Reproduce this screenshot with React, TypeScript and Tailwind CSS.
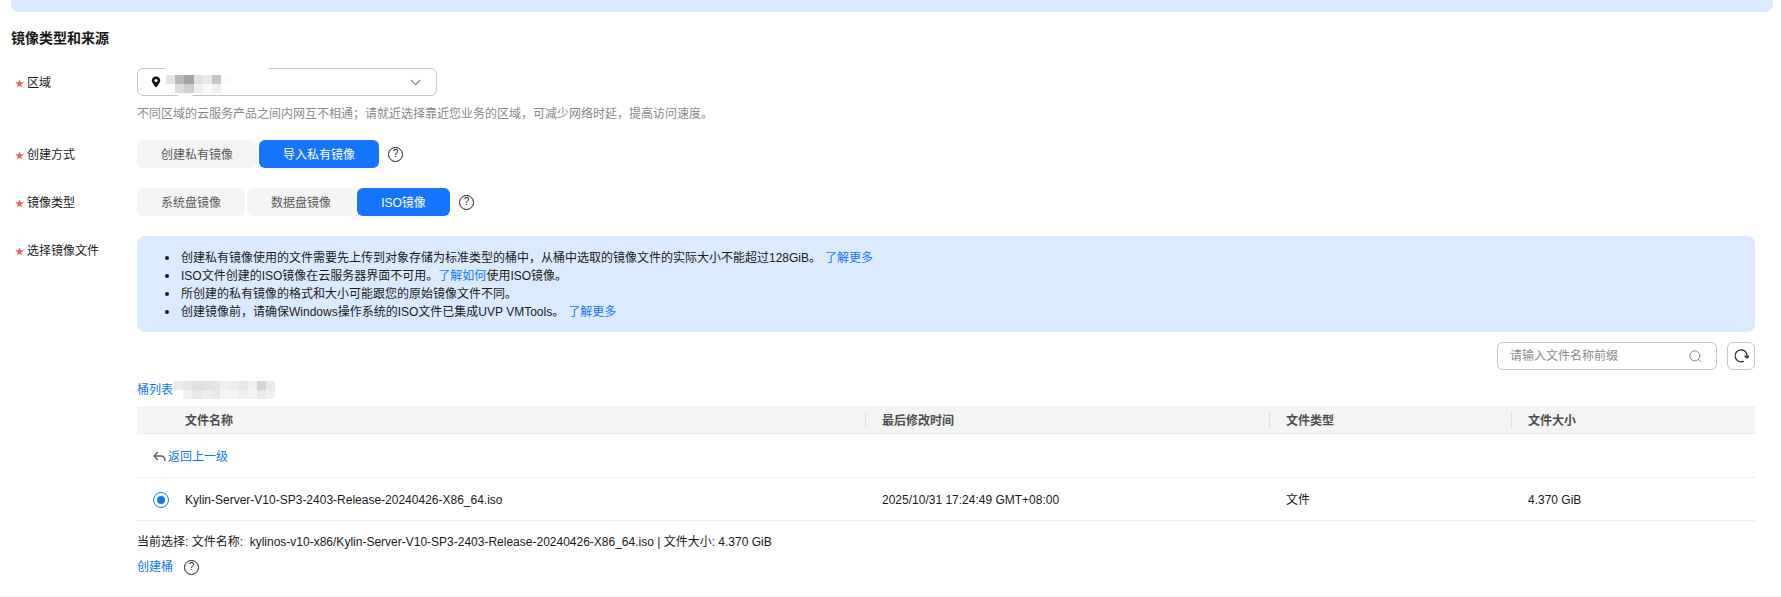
import { Search, ChevronDown } from 'lucide-react';

const regionCells = [
  ['#e5e5e5', '#b8b8b8', '#a5a5a9', '#e0e0e0', '#e8e8e8', '#c4c4c4', '#fafdff'],
  ['#ffffff', '#dcdcdc', '#cfcfcf', '#f0f0f0', '#fafaf8', '#f0f0ec', '#ffffff'],
];

const bucketCells = [
  ['#e8ebee', '#e6e6e6', '#e0e0e0', '#e2e2e4', '#e6e4e4', '#f0f0f0', '#ebedee', '#e6e8e8', '#eff0f0', '#d5d5d3', '#e8eaec'],
  ['#ffffff', '#f0f0f0', '#e8e8e8', '#ededed', '#e8e8e8', '#f4f4f4', '#f4f4f4', '#efefef', '#f3f3f3', '#e8e8e8', '#f0f0f2'],
];

function Mosaic({ cells, className }: { cells: string[][]; className: string }) {
  return (
    <div className={`absolute flex flex-col ${className}`}>
      {cells.map((row, i) => (
        <div key={i} className="flex">
          {row.map((color, j) => (
            <div key={j} className="w-[9.2px] h-[9px]" style={{ backgroundColor: color }} />
          ))}
        </div>
      ))}
    </div>
  );
}

function FormLabel({ children }: { children: string }) {
  return (
    <div className="w-[126px] shrink-0 h-7 flex items-center pl-1 pt-[2px] text-[#191919]">
      <svg width="9" height="9" viewBox="0 0 10 10" className="mr-[3px] shrink-0">
        <path d="M5 0.4L6.2 3.7L9.7 3.8L6.9 6L7.9 9.4L5 7.4L2.1 9.4L3.1 6L0.3 3.8L3.8 3.7Z" fill="#f0605c" />
      </svg>
      <span>{children}</span>
    </div>
  );
}

function HelpIcon({ className = '' }: { className?: string }) {
  return (
    <span className={`w-[15px] h-[15px] rounded-full border border-[#191919] flex items-center justify-center text-[10px] leading-none text-[#191919] ${className}`}>
      ?
    </span>
  );
}

function TabButton({ label, width, active }: { label: string; width: string; active?: boolean }) {
  return (
    <button
      className={`h-7 pt-[2px] rounded-[6px] text-center ${width} ${active ? 'bg-[#1476ff] text-white' : 'bg-[#f4f4f4] text-[#595959]'}`}
    >
      {label}
    </button>
  );
}

function HeaderCell({ label, first }: { label: string; first?: boolean }) {
  return (
    <div className={`relative h-full flex items-center pt-[2px] font-bold text-[#4d4d4d] ${first ? 'pl-[48px]' : 'pl-[17px]'}`}>
      {!first && <span className="absolute left-0 top-[6px] h-4 w-px bg-[#dfdfdf]" />}
      {label}
    </div>
  );
}

function NoticeItem({ children }: { children: React.ReactNode }) {
  return (
    <li className="flex items-start">
      <span className="mt-[7px] mr-3 w-1 h-1 shrink-0 rounded-full bg-[#191919]" />
      <span>{children}</span>
    </li>
  );
}

function App() {
  return (
    <div className="h-[597px] w-full overflow-hidden box-border border-b border-[#f0f0f0] bg-white pl-[11px] pr-2 text-xs leading-[18px] text-[#191919] font-['Liberation_Sans','Noto_Sans_CJK_SC',sans-serif]">
      <div className="h-3 rounded-b-lg bg-[#dceaff]" />

      <h2 className="mt-4 h-5 text-sm leading-5 font-bold text-[#191919]">镜像类型和来源</h2>

      <div className="mt-5 flex">
        <FormLabel>区域</FormLabel>
        <div>
          <div className="relative w-[300px] h-7 rounded-[6px] border border-[#c7c7c7] flex items-center justify-between pl-[13px] pr-3">
            <svg width="10" height="12" viewBox="0 0 10 12">
              <path d="M5 0.5C2.5 0.5 0.8 2.3 0.8 4.6C0.8 7.3 5 11.5 5 11.5C5 11.5 9.2 7.3 9.2 4.6C9.2 2.3 7.5 0.5 5 0.5Z" fill="#111" />
              <circle cx="5" cy="4.5" r="1.6" fill="#fff" />
            </svg>
            <ChevronDown size={17} strokeWidth={1.5} className="text-[#777]" />
            <div className="absolute left-[27px] top-[-2px] w-[104px] h-[5px] bg-white rounded-full" />
            <div className="absolute left-[40px] bottom-[-2px] w-[14px] h-[4px] bg-white rounded-full" />
            <Mosaic cells={regionCells} className="left-[28px] top-[6px]" />
          </div>
          <p className="mt-[9px] text-[#8a8a8a]">
            {'不同区域的云服务产品之间内网互不相通\uFF1B请就近选择靠近您业务的区域\uFF0C可减少网络时延\uFF0C提高访问速度\u3002'}
          </p>
        </div>
      </div>

      <div className="mt-[17px] flex items-center">
        <FormLabel>创建方式</FormLabel>
        <div className="flex items-center gap-[2px]">
          <TabButton label="创建私有镜像" width="w-[120px]" />
          <TabButton label="导入私有镜像" width="w-[120px]" active />
        </div>
        <HelpIcon className="ml-[9px]" />
      </div>

      <div className="mt-5 flex items-center">
        <FormLabel>镜像类型</FormLabel>
        <div className="flex items-center gap-[2px]">
          <TabButton label="系统盘镜像" width="w-[108px]" />
          <TabButton label="数据盘镜像" width="w-[108px]" />
          <TabButton label="ISO镜像" width="w-[93px]" active />
        </div>
        <HelpIcon className="ml-[9px]" />
      </div>

      <div className="mt-5 flex">
        <FormLabel>选择镜像文件</FormLabel>
        <div className="w-[1618px]">
          <div className="rounded-lg bg-[#dceaff] pt-[13px] pb-[11px] pl-7">
            <ul>
              <NoticeItem>
                {'创建私有镜像使用的文件需要先上传到对象存储为标准类型的桶中\uFF0C从桶中选取的镜像文件的实际大小不能超过128GiB\u3002'}
                <a className="ml-1 text-[#1476ff]">了解更多</a>
              </NoticeItem>
              <NoticeItem>
                {'ISO文件创建的ISO镜像在云服务器界面不可用\u3002'}<a className="text-[#1476ff]">了解如何</a>{'使用ISO镜像\u3002'}
              </NoticeItem>
              <NoticeItem>{'所创建的私有镜像的格式和大小可能跟您的原始镜像文件不同\u3002'}</NoticeItem>
              <NoticeItem>
                {'创建镜像前\uFF0C请确保Windows操作系统的ISO文件已集成UVP VMTools\u3002'}
                <a className="ml-1 text-[#1476ff]">了解更多</a>
              </NoticeItem>
            </ul>
          </div>

          <div className="mt-[10px] flex justify-end gap-[10px]">
            <div className="w-[220px] h-7 rounded-[6px] border border-[#c7c7c7] flex items-center justify-between pl-3 pr-[13px]">
              <span className="text-[#8a8a8a]">请输入文件名称前缀</span>
              <Search size={15} strokeWidth={1.4} className="text-[#777]" />
            </div>
            <button className="w-7 h-7 rounded-[6px] border border-[#c7c7c7] flex items-center justify-center">
              <svg width="16" height="16" viewBox="0 0 16 16" fill="none" stroke="#222" strokeWidth="1.2">
                <path d="M10.5 13.3A6 6 0 1 1 14 8.8" strokeLinecap="round" />
                <path d="M12 8L14 10.2L15.8 8" strokeLinecap="round" strokeLinejoin="round" />
              </svg>
            </button>
          </div>

          <div className="relative mt-[9px] h-[18px]">
            <a className="block pt-[2px] text-[#1476ff]">桶列表</a>
            <Mosaic cells={bucketCells} className="left-[37px] top-[2px]" />
          </div>

          <div className="mt-[9px]">
            <div className="grid grid-cols-[728px_404px_242px_1fr] h-7 items-center bg-[#f4f4f4] border-b border-[#ededed]">
              <HeaderCell label="文件名称" first />
              <HeaderCell label="最后修改时间" />
              <HeaderCell label="文件类型" />
              <HeaderCell label="文件大小" />
            </div>
            <div className="h-11 flex items-center pl-4 pt-[2px] border-b border-[#ededed]">
              <svg width="13" height="11" viewBox="0 0 13 11" fill="none" stroke="#595959" strokeWidth="1.3" className="mr-[2px]">
                <path d="M5 1L1 5L5 9" strokeLinejoin="round" />
                <path d="M1 5H8C10.2 5 12 6.8 12 10" />
              </svg>
              <a className="text-[#1476ff]">返回上一级</a>
            </div>
            <div className="grid grid-cols-[728px_404px_242px_1fr] h-[43px] pt-[2px] items-center border-b border-[#ededed]">
              <div className="flex items-center pl-4">
                <span className="w-4 h-4 rounded-full border border-[#1476ff] flex items-center justify-center mr-[16px]">
                  <span className="w-2 h-2 rounded-full bg-[#1476ff]" />
                </span>
                Kylin-Server-V10-SP3-2403-Release-20240426-X86_64.iso
              </div>
              <div className="pl-[17px]">2025/10/31 17:24:49 GMT+08:00</div>
              <div className="pl-[17px]">文件</div>
              <div className="pl-[17px]">4.370 GiB</div>
            </div>
          </div>

          <p className="mt-3">
            当前选择: 文件名称:&nbsp; kylinos-v10-x86/Kylin-Server-V10-SP3-2403-Release-20240426-X86_64.iso | 文件大小: 4.370 GiB
          </p>
          <div className="mt-[7px] flex items-center">
            <a className="text-[#1476ff]">创建桶</a>
            <HelpIcon className="ml-[11px]" />
          </div>
        </div>
      </div>
    </div>
  );
}

export default App;
